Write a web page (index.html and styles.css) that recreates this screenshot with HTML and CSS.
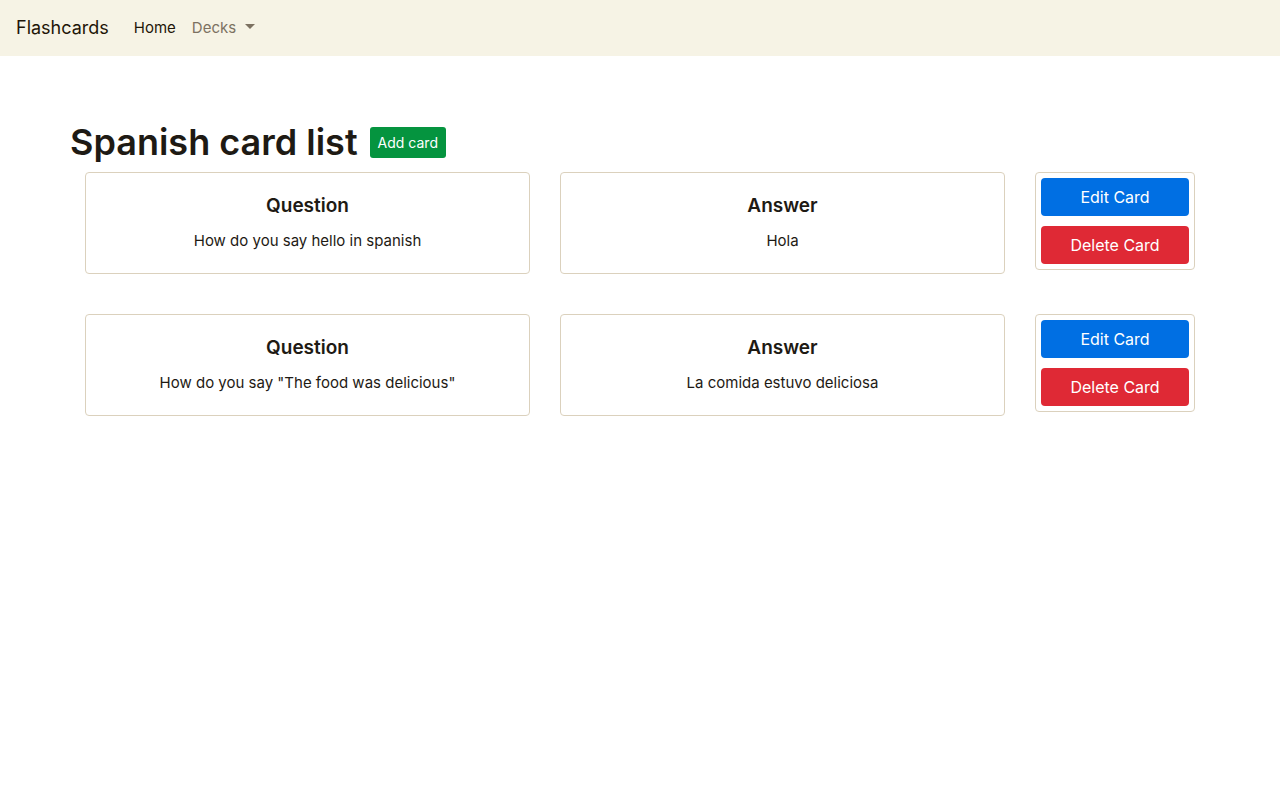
FILE: index.html
```html
<!DOCTYPE html>
<html lang="en">
<head>
<meta charset="utf-8">
<title>Flashcards</title>
<link rel="stylesheet" href="styles.css">
</head>
<body>
<nav class="navbar">
  <a class="brand" href="#">Flashcards</a>
  <a class="nav-link active" href="#">Home</a>
  <button class="nav-link dropdown" type="button">Decks</button>
</nav>
<main class="container">
  <header class="page-header">
    <h1>Spanish card list</h1>
    <button class="btn btn-small btn-success" type="button">Add card</button>
  </header>
  <section class="row">
    <article class="card">
      <h2>Question</h2>
      <p>How do you say hello in spanish</p>
    </article>
    <article class="card">
      <h2>Answer</h2>
      <p>Hola</p>
    </article>
    <div class="actions">
      <button class="btn btn-primary" type="button">Edit Card</button>
      <button class="btn btn-danger" type="button">Delete Card</button>
    </div>
  </section>
  <section class="row">
    <article class="card">
      <h2>Question</h2>
      <p>How do you say "The food was delicious"</p>
    </article>
    <article class="card">
      <h2>Answer</h2>
      <p>La comida estuvo deliciosa</p>
    </article>
    <div class="actions">
      <button class="btn btn-primary" type="button">Edit Card</button>
      <button class="btn btn-danger" type="button">Delete Card</button>
    </div>
  </section>
</main>
</body>
</html>
```

FILE: styles.css
```css
* { box-sizing: border-box; }

body {
  margin: 0;
  font-family: Inter, "Liberation Sans", sans-serif;
  font-size: 15px;
  line-height: 24px;
  color: #1e1a14;
  background: #fff;
}

.navbar {
  display: flex;
  align-items: center;
  min-height: 56px;
  padding: 8px 16px;
  background: #f6f3e5;
}

.brand {
  margin-right: 17px;
  font-size: 18px;
  color: #1e1508;
  text-decoration: none;
}

.nav-link {
  padding: 8px;
  border: 0;
  background: none;
  font: inherit;
  color: #7c7161;
  text-decoration: none;
}

.nav-link.active { color: #1e1508; }

.dropdown::after {
  content: "";
  display: inline-block;
  margin-left: 9px;
  vertical-align: 4px;
  border: 5px solid transparent;
  border-top-color: currentColor;
  border-bottom: 0;
}

.container {
  max-width: 1140px;
  margin: 0 auto;
  padding-top: 64px;
}

.page-header {
  display: flex;
  align-items: center;
  gap: 12px;
  min-height: 44px;
  margin-bottom: 8px;
}

h1 {
  margin: 0;
  font-size: 36px;
  font-weight: 600;
  line-height: 44px;
}

.row {
  display: grid;
  grid-template-columns: 5fr 5fr 160px;
  gap: 30px;
  align-items: start;
  margin-bottom: 40px;
  padding: 0 15px;
}

.card {
  padding: 20px;
  border: 1px solid #dbd1bd;
  border-radius: 4px;
  text-align: center;
}

.card h2 {
  margin: 0 0 10px;
  font-size: 19px;
  font-weight: 600;
  line-height: 26px;
}

.card p { margin: 0; }

.actions {
  display: grid;
  gap: 10px;
  padding: 5px;
  border: 1px solid #dbd1bd;
  border-radius: 4px;
}

.btn {
  padding: 7px 12px;
  border: 0;
  border-radius: 4px;
  font: inherit;
  font-size: 16px;
  color: #fff;
}

.btn-small {
  padding: 5px 8px;
  border-radius: 3px;
  font-size: 14px;
  line-height: 21px;
}

.btn-success { background: #05943f; }
.btn-primary { background: #006fe3; }
.btn-danger { background: #df2935; }
```
